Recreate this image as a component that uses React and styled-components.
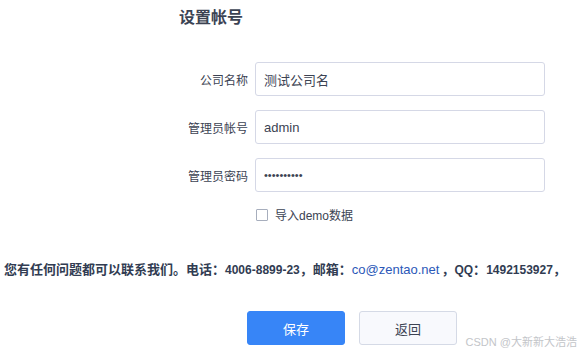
import React, { useState } from "react";
import styled, { createGlobalStyle } from "styled-components";

const GlobalStyle = createGlobalStyle`
  html, body {
    margin: 0;
    padding: 0;
    background: #fff;
  }
  body {
    font-family: "Liberation Sans", "Noto Sans CJK SC", sans-serif;
    color: #3c4353;
  }
`;

const Page = styled.div`
  width: 577px;
  height: 354px;
  position: relative;
  overflow: hidden;
  padding-top: 8px;
  box-sizing: border-box;
`;

const Title = styled.h3`
  margin: 0 0 34px 179px;
  font-size: 16px;
  line-height: 20px;
  font-weight: bold;
  color: #3c4353;
`;

const Form = styled.div`
  display: grid;
  grid-template-columns: 248px 290px;
  column-gap: 7px;
  row-gap: 14px;
  align-items: center;
`;

const Label = styled.label`
  text-align: right;
  font-size: 12px;
  color: #3c4353;
`;

const Input = styled.input`
  height: 34px;
  box-sizing: border-box;
  border: 1px solid #d5d8e6;
  border-radius: 3px;
  padding: 0 8px;
  font-family: inherit;
  font-size: 13px;
  color: #3c4353;
  outline: none;
  background: #fff;

  &[type="password"] {
    font-size: 11px;
  }
`;

const CheckRow = styled.label`
  grid-column: 2;
  display: flex;
  align-items: center;
  gap: 7px;
  font-size: 12px;
  color: #3c4353;
`;

const Box = styled.span`
  width: 10px;
  height: 10px;
  border: 1px solid #a7aebd;
  border-radius: 1px;
  margin-left: 1px;
  background: #fff;
`;

const Contact = styled.p`
  margin: 39px 0 0 4px;
  font-size: 13px;
  line-height: 16px;
  font-weight: bold;
  color: #313c52;
  white-space: nowrap;
`;

const Num = styled.span`
  font-size: 12px;
`;

const Mail = styled.a`
  font-size: 13px;
  color: #2b58b8;
  font-weight: normal;
  text-decoration: none;
  margin-right: 2px;
`;

const Actions = styled.div`
  display: flex;
  gap: 14px;
  margin: 33px 0 0 247px;
`;

const Button = styled.button`
  width: 98px;
  height: 34px;
  border-radius: 3px;
  font-family: inherit;
  font-size: 13px;
  cursor: pointer;
  border: 1px solid ${(p) => (p.$primary ? "#3785f7" : "#d5dae6")};
  background: ${(p) => (p.$primary ? "#3785f7" : "#f8f9fd")};
  color: ${(p) => (p.$primary ? "#fff" : "#3c4353")};
`;

const Watermark = styled.span`
  position: absolute;
  right: 0;
  bottom: 5px;
  font-size: 11px;
  color: #c3c5c9;
  white-space: nowrap;
`;

export default function App() {
  const [form, setForm] = useState({
    company: "测试公司名",
    account: "admin",
    password: "1234567890",
  });

  const change = (e) => {
    const { name, value } = e.target;
    setForm((prev) => ({ ...prev, [name]: value }));
  };

  return (
    <Page>
      <GlobalStyle />
      <Title>设置帐号</Title>
      <Form>
        <Label htmlFor="company">公司名称</Label>
        <Input id="company" name="company" value={form.company} onChange={change} />
        <Label htmlFor="account">管理员帐号</Label>
        <Input id="account" name="account" value={form.account} onChange={change} />
        <Label htmlFor="password">管理员密码</Label>
        <Input id="password" name="password" type="password" value={form.password} onChange={change} />
        <CheckRow>
          <Box />
          导入demo数据
        </CheckRow>
      </Form>
      <Contact>
        您有任何问题都可以联系我们。电话：<Num>4006-8899-23</Num>，邮箱：<Mail href="#">co@zentao.net</Mail>，<Num>QQ</Num>：<Num>1492153927</Num>，
      </Contact>
      <Actions>
        <Button $primary>保存</Button>
        <Button>返回</Button>
      </Actions>
      <Watermark>CSDN @大新新大浩浩</Watermark>
    </Page>
  );
}
